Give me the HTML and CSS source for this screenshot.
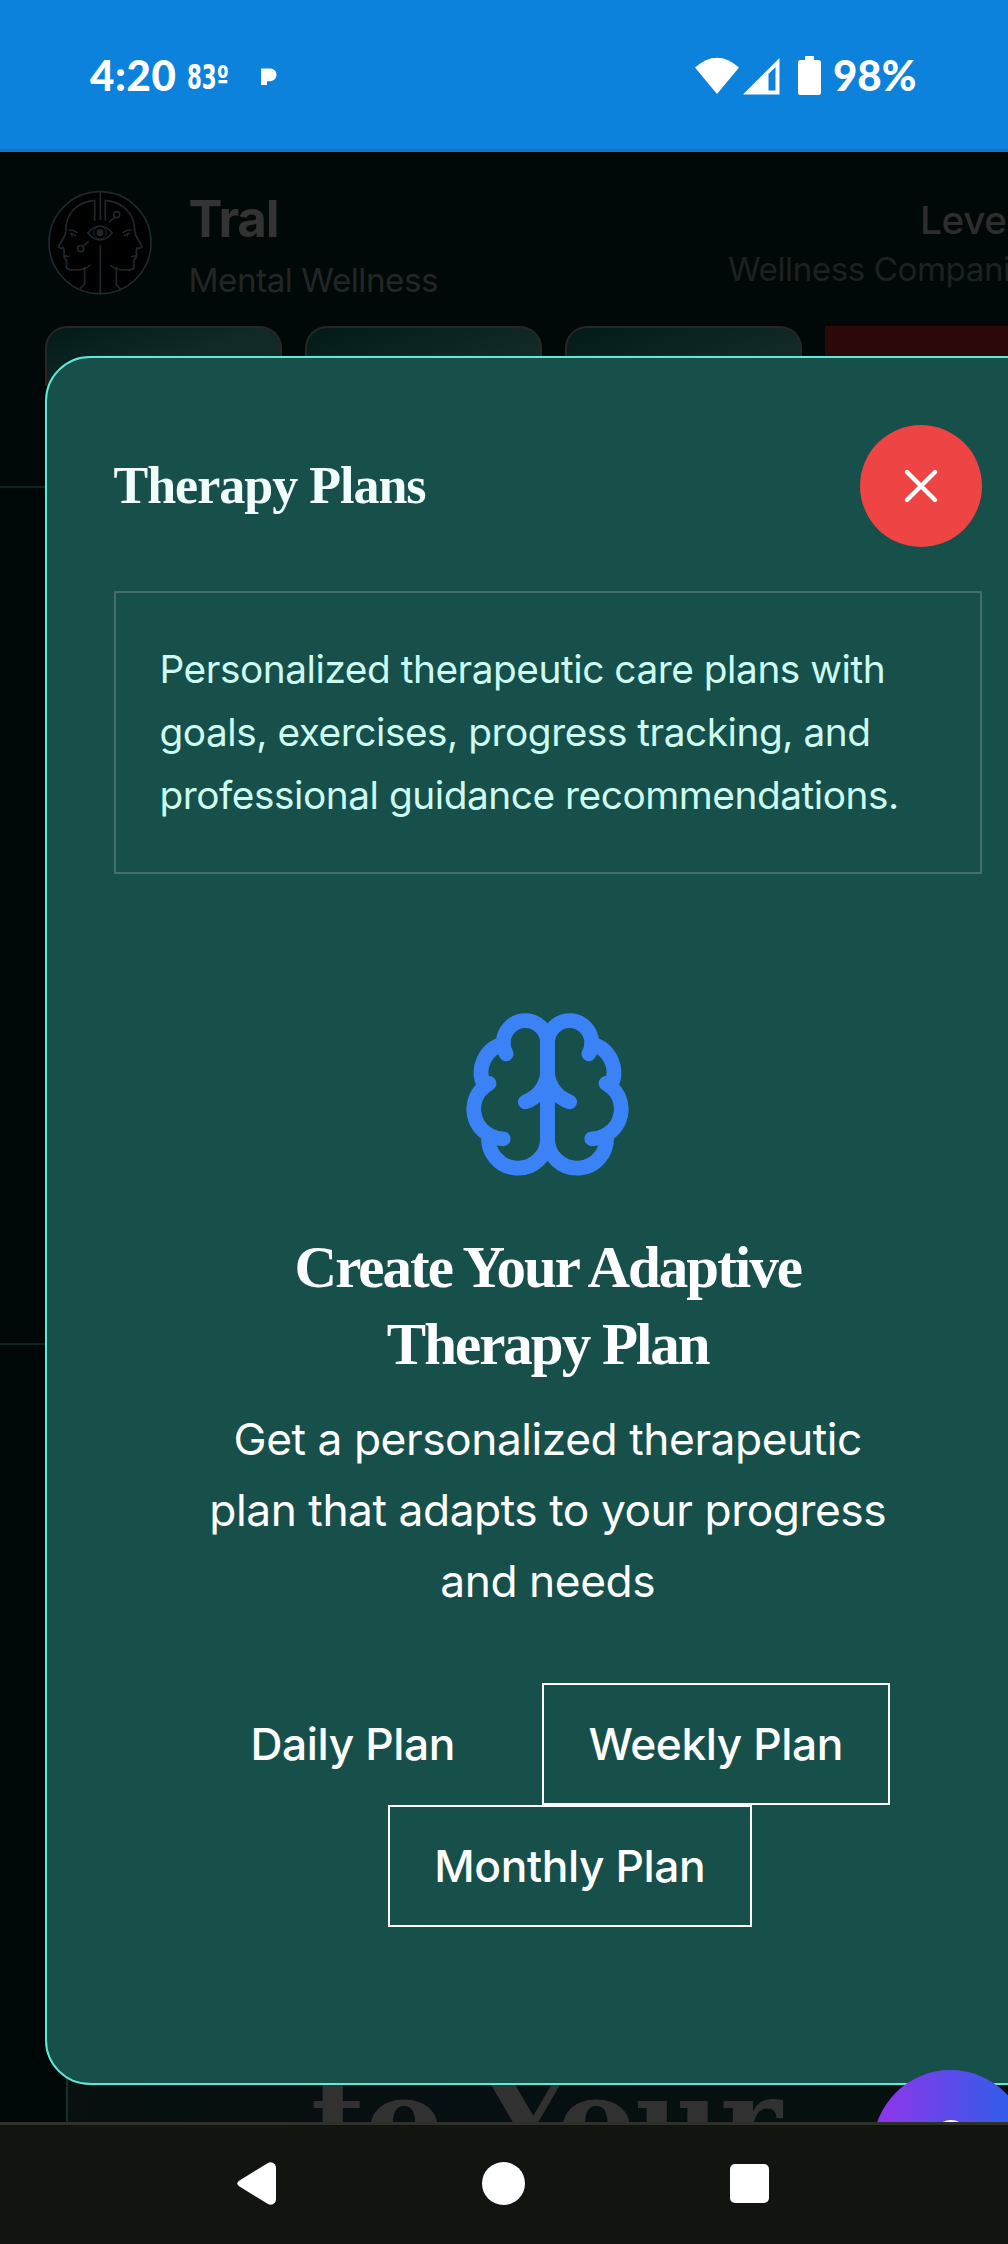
FILE: index.html
```html
<!DOCTYPE html>
<html lang="en">
<head>
<meta charset="utf-8">
<title>Therapy Plans</title>
<link rel="stylesheet" href="styles.css">
</head>
<body>
<div class="phone">
  <div class="status">
    <div class="status-left">
      <span class="clock">4:20</span>
      <span class="temp">83º</span>
      <svg class="p-icon" width="16" height="18" viewBox="0 0 16 18"><path fill="#fff" d="M0 .5h8.500c4.500 0 7 2.500 7 6 0 4.200-3 6.800-7.500 6.800H6V17H0z"/></svg>
    </div>
    <div class="status-right">
      <svg width="86" height="40" viewBox="0 0 86 40" fill="#fff">
        <path d="M0 11.500Q22 -8 44 11.500L22 38z"/>
        <path fill-rule="evenodd" d="M48 38.500L84.500 2v36.500zM73.500 18v16.500h7V11z"/>
      </svg>
      <svg class="battery" width="23" height="39" viewBox="0 0 23 39"><path fill="#fff" d="M7 0h9v4h4.500a2.500 2.500 0 0 1 2.500 2.500v30a2.500 2.500 0 0 1-2.500 2.500h-18A2.500 2.500 0 0 1 0 36.500v-30A2.500 2.500 0 0 1 2.500 4H7z"/></svg>
      <span class="percent">98%</span>
    </div>
  </div>

  <div class="screen">
    <header class="app-header">
      <div class="brand-row">
        <svg class="logo" width="104" height="106" viewBox="143 119 312 318" fill="none" stroke="#1e282c" stroke-width="5" stroke-linejoin="round">
          <circle cx="299" cy="277" r="153" fill="#000"/>
          <path d="M300 124v85M300 285v147M283 211v-61c-55 5-88 42-86 91l-3 13-19 34c0 6 8 6 15 5l2 11-2 10 8 4-7 3 8 11-1 18c2 11 14 8 24 9 22 1 36-4 48-15M253 349v52l-13 14"/>
          <path d="M315 211v-61c55 5 88 42 88 91l3 13 19 34c0 6-8 6-15 5l-3 11 3 10-8 4 6 3-8 11 1 18c-2 11-12 8-22 9-22 1-38-4-50-15M348 349v54l12 13"/>
          <path d="M262 248q37-42 74 0-37 42-74 0z"/>
          <circle cx="299" cy="247" r="19" stroke-width="3"/><circle cx="299" cy="247" r="10" fill="#1e282c" stroke="none"/>
          <circle cx="349" cy="193" r="9"/><path d="M343 201l-17 15"/>
          <circle cx="241" cy="295" r="9"/><path d="M248 288l17-15"/>
          <path stroke-width="4" d="M205 240q13-4 26 8M209 250q8-3 18 8M213 250l3 9M393 240q-13-4-26 8M389 250q-8-3-18 8M383 250l-3 9M190 318h18M410 318h-18"/>
        </svg>
        <div class="brand">
          <div class="brand-name">Tral</div>
          <div class="brand-sub">Mental Wellness</div>
        </div>
        <div class="level">
          <div class="level-name">Level</div>
          <div class="level-sub">Wellness Companion</div>
        </div>
      </div>
      <div class="tabs">
        <div class="tab first"></div>
        <div class="tab"></div>
        <div class="tab"></div>
        <div class="tab danger"></div>
      </div>
    </header>
    <div class="band"></div>
    <section class="hero">
      <div class="hero-card"><div class="hero-title">to Your</div></div>
    </section>

    <div class="modal">
      <div class="modal-head">
        <h2 class="modal-title">Therapy Plans</h2>
        <button class="close" aria-label="Close">
          <svg width="44" height="44" viewBox="0 0 44 44" stroke="#fff" stroke-width="4.400" stroke-linecap="round"><path d="M8 8l28 28M36 8L8 36"/></svg>
        </button>
      </div>
      <p class="note">Personalized therapeutic care plans with<br>goals, exercises, progress tracking, and<br>professional guidance recommendations.</p>
      <svg class="brain" width="177" height="177" viewBox="0 0 24 24" fill="none" stroke="#3b82f6" stroke-width="2" stroke-linecap="round" stroke-linejoin="round">
        <path d="M12 5a3 3 0 1 0-5.997.125 4 4 0 0 0-2.526 5.770 4 4 0 0 0 .556 6.588A4 4 0 1 0 12 18Z"/>
        <path d="M12 5a3 3 0 1 1 5.997.125 4 4 0 0 1 2.526 5.770 4 4 0 0 1-.556 6.588A4 4 0 1 1 12 18Z"/>
        <path d="M15 13a4.500 4.500 0 0 1-3-4 4.500 4.500 0 0 1-3 4M17.599 6.500a3 3 0 0 0 .399-1.375M6.003 5.125A3 3 0 0 0 6.401 6.500M3.477 10.896a4 4 0 0 1 .585-.396M19.938 10.500a4 4 0 0 1 .585.396M6 18a4 4 0 0 1-1.967-.516M19.967 17.484A4 4 0 0 1 18 18"/>
      </svg>
      <h3 class="plan-title">Create Your Adaptive<br>Therapy Plan</h3>
      <p class="plan-text">Get a personalized therapeutic<br>plan that adapts to your progress<br>and needs</p>
      <div class="plan-row">
        <button class="plan plain">Daily Plan</button>
        <button class="plan weekly">Weekly Plan</button>
      </div>
      <div class="plan-row second">
        <button class="plan monthly">Monthly Plan</button>
      </div>
    </div>

    <div class="fab">
      <svg width="44" height="60" viewBox="0 0 44 60" fill="none" stroke="#fff" stroke-width="5"><circle cx="22" cy="18" r="15.500"/></svg>
    </div>
  </div>

  <nav class="nav">
    <svg width="39" height="43" viewBox="0 0 39 43"><path fill="#fff" d="M2.500 18.500L31 .900Q35-1 38 2.500 39 4 39 6v31q0 2-1 3.500-3 3.500-7 1.600L2.500 24.500Q-2 21.500 2.500 18.500z"/></svg>
    <svg width="43" height="43" viewBox="0 0 43 43"><circle cx="21.500" cy="21.500" r="21.500" fill="#fff"/></svg>
    <svg width="39" height="39" viewBox="0 0 39 39"><rect width="39" height="39" rx="5" fill="#fff"/></svg>
  </nav>
</div>
</body>
</html>
```
FILE: styles.css
```css
* { box-sizing: border-box; }
body, h2, h3, p { margin: 0; }
body { font-family: Inter, "Liberation Sans", sans-serif; background: #000908; }
svg { display: block; flex: none; }
button { font: inherit; color: inherit; background: none; border: 0; padding: 0; margin: 0; }
.phone { width: 1008px; height: 2244px; display: flex; flex-direction: column; overflow: hidden; }

.status {
  flex: none; height: 152px; background: #0d82dc; border-bottom: 3px solid #0c76c8;
  display: flex; justify-content: space-between; padding: 0 90px;
  color: #fff; font-family: Lato, "Open Sans", sans-serif; font-weight: 900;
}
.status-left, .status-right { display: flex; }
.clock, .percent { font-size: 42px; line-height: 50px; margin-top: 50px; white-space: nowrap; }
.clock { width: 97px; letter-spacing: .600px; }
.temp { width: 74px; font: 700 33px/40px "DejaVu Sans Condensed", sans-serif; margin-top: 58px; transform: scaleX(.72); transform-origin: 0 0; }
.p-icon { margin-top: 68px; }
.status-right > svg { margin-top: 56px; }
.status-right > .battery { margin-left: 17px; }
.percent { margin-left: 12px; width: 85px; }

.screen { flex: none; height: 1970px; position: relative; overflow: hidden; background: #000807; }
.app-header { height: 336px; padding: 38px 0 0 44.500px; background: #000908; border-bottom: 2px solid #10231f; }
.brand-row { display: flex; height: 136px; }
.logo { margin-left: 3px; }
.brand { flex: none; margin-left: 37px; width: 539.500px; }
.brand-name { font-size: 51px; font-weight: 700; line-height: 60px; margin-top: -1px; color: #333; letter-spacing: -1.200px; }
.brand-sub { font-size: 33.200px; line-height: 40px; margin-top: 11px; color: #232626; letter-spacing: -.450px; }
.level { flex: none; white-space: nowrap; }
.level-name { font-size: 38.800px; font-weight: 500; line-height: 50px; margin-left: 192px; margin-top: 5px; color: #2c2e2e; letter-spacing: -.400px; }
.level-sub { font-size: 33.200px; line-height: 40px; margin-top: 4px; color: #1c2121; letter-spacing: -.450px; }
.tabs { display: flex; gap: 22.500px; }
.tab { flex: none; width: 237.500px; height: 90px; border: 2px solid #272727; border-radius: 22px 22px 0 0; border-bottom: 0; background: linear-gradient(160deg, #021b18, #112a27 60%); }
.tab.first { height: 60px; border-bottom: 6px solid #2d2000; }
.tab.danger { background: #2c0808; border: 0; border-radius: 0; }
.band { height: 857px; border-bottom: 2px solid #10231f; }
.hero { padding: 100px 0 0 66px; height: 777px; }
.hero-card { width: 985px; height: 717px; border-left: 2px solid #12302b; background: linear-gradient(90deg, #08110f, #070f12 25%, #06110f); display: flex; align-items: flex-end; }
.hero-title { margin-left: 243px; font: 700 117px/130px "DejaVu Serif", serif; color: #313131; height: 106px; white-space: nowrap; }

.modal {
  position: absolute; left: 44.500px; top: 204px; width: 1006.500px; height: 1729px;
  border: 2px solid #5eead4; border-radius: 45px; background: #174f4b;
  padding: 66.500px 67px; display: flex; flex-direction: column; align-items: center; color: #fff;
}
.modal-head { align-self: stretch; display: flex; justify-content: space-between; align-items: center; height: 122px; }
.modal-title { font: 700 52px/60px "Liberation Serif", serif; color: #f0fdfa; letter-spacing: -1px; white-space: nowrap; }
.close { width: 122px; height: 122px; border-radius: 50%; background: #ef4444; display: flex; align-items: center; justify-content: center; }
.note { align-self: stretch; margin-top: 44px; height: 283px; border: 2px solid #446f6c; padding: 44px; font-size: 38.800px; line-height: 63px; letter-spacing: -.460px; color: #ccfbf1; white-space: nowrap; }
.brain { margin-top: 132.500px; }
.plan-title { margin-top: 45.500px; text-align: center; font: 700 59px/77px "Liberation Serif", serif; letter-spacing: -2px; white-space: nowrap; }
.plan-text { margin-top: 21.500px; text-align: center; font-size: 44.300px; line-height: 71px; letter-spacing: -.460px; white-space: nowrap; }
.plan-row { display: flex; height: 122px; margin-top: 66px; }
.plan-row.second { margin-top: 0; margin-left: 44px; }
.plan { height: 122px; border: 2px solid #fff; font-size: 44.300px; font-weight: 500; letter-spacing: -.400px; white-space: nowrap; }
.plan.plain { border-color: transparent; width: 294px; }
.weekly { width: 348px; margin-left: 42px; }
.monthly { width: 364px; }
.fab { position: absolute; left: 873px; top: 1918px; width: 155px; height: 155px; border-radius: 50%; background: linear-gradient(90deg, #9333ea, #2563eb); display: flex; justify-content: center; padding-top: 50px; }

.nav { flex: none; height: 122px; background: #12150f; border-top: 3px solid #2d3129; display: flex; align-items: center; padding: 0 0 3px 237px; }
.nav svg + svg { margin-left: 206px; }
.nav svg + svg + svg { margin-left: 205px; }
```
